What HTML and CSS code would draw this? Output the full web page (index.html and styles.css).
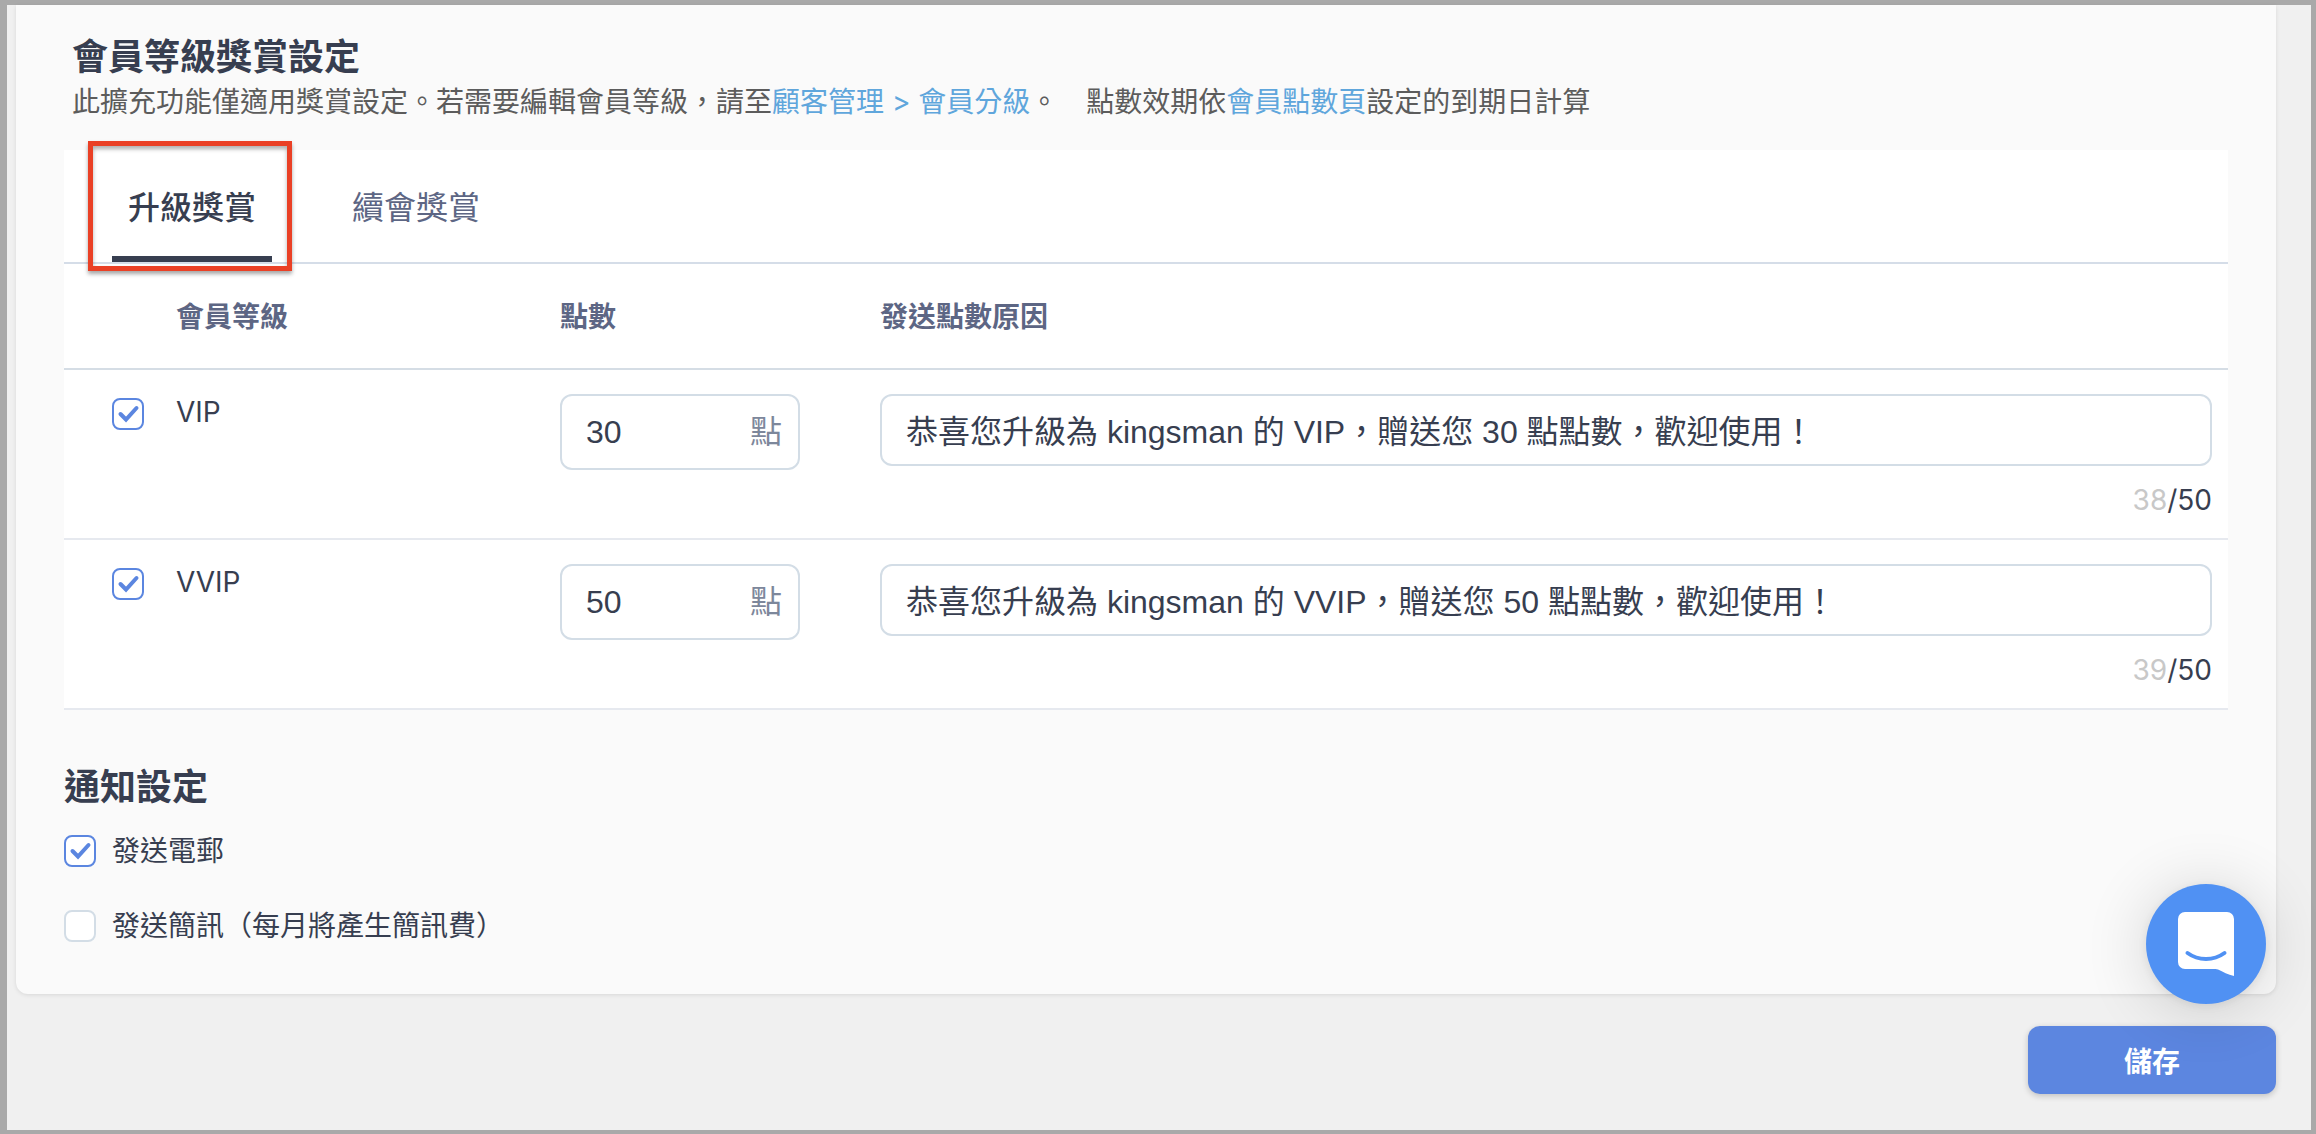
FILE: index.html
```html
<!DOCTYPE html>
<html lang="zh-Hant">
<head>
  <meta charset="UTF-8" />
  <meta name="viewport" content="width=device-width, initial-scale=1.0" />
  <title>會員等級獎賞設定</title>
  <link rel="stylesheet" href="styles.css">
</head>
<body>
  <form class="page">
    <div class="card">
      <div class="intro">
        <h2>會員等級獎賞設定</h2>
        <p>此擴充功能僅適用獎賞設定。若需要編輯會員等級，請至<a href="#">顧客管理 &gt; 會員分級</a>。<span class="note">點數效期依<a href="#">會員點數頁</a>設定的到期日計算</span></p>
      </div>

      <div class="panel">
        <div class="tabs">
          <button type="button" class="tab active">升級獎賞</button>
          <button type="button" class="tab">續會獎賞</button>
        </div>

        <table>
          <colgroup>
            <col class="col-check">
            <col class="col-level">
            <col class="col-points">
            <col>
          </colgroup>
          <thead>
            <tr>
              <th></th>
              <th>會員等級</th>
              <th>點數</th>
              <th>發送點數原因</th>
            </tr>
          </thead>
          <tbody>
            <tr>
              <td class="cell-check">
                <span class="checkbox">
                  <input type="checkbox" id="vip" checked>
                  <svg viewBox="0 0 32 32"><path d="M8.500 16l5.500 5.500L24.500 10"/></svg>
                </span>
              </td>
              <td><label class="level" for="vip">VIP</label></td>
              <td>
                <div class="points">
                  <input type="text" id="vipPoints" value="30" aria-label="VIP 點數">
                  <label for="vipPoints">點</label>
                </div>
              </td>
              <td class="cell-reason">
                <input type="text" class="reason" value="恭喜您升級為 kingsman 的 VIP，贈送您 30 點點數，歡迎使用！" aria-label="VIP 發送點數原因">
                <div class="count"><span>38</span>/50</div>
              </td>
            </tr>
            <tr>
              <td class="cell-check">
                <span class="checkbox">
                  <input type="checkbox" id="vvip" checked>
                  <svg viewBox="0 0 32 32"><path d="M8.500 16l5.500 5.500L24.500 10"/></svg>
                </span>
              </td>
              <td><label class="level" for="vvip">VVIP</label></td>
              <td>
                <div class="points">
                  <input type="text" id="vvipPoints" value="50" aria-label="VVIP 點數">
                  <label for="vvipPoints">點</label>
                </div>
              </td>
              <td class="cell-reason">
                <input type="text" class="reason" value="恭喜您升級為 kingsman 的 VVIP，贈送您 50 點點數，歡迎使用！" aria-label="VVIP 發送點數原因">
                <div class="count"><span>39</span>/50</div>
              </td>
            </tr>
          </tbody>
        </table>
      </div>

      <div class="notify">
        <h2>通知設定</h2>
        <label class="option">
          <span class="checkbox">
            <input type="checkbox" checked>
            <svg viewBox="0 0 32 32"><path d="M8.500 16l5.500 5.500L24.500 10"/></svg>
          </span>
          發送電郵
        </label>
        <label class="option">
          <span class="checkbox">
            <input type="checkbox">
            <svg viewBox="0 0 32 32"><path d="M8.500 16l5.500 5.500L24.500 10"/></svg>
          </span>
          發送簡訊（每月將產生簡訊費）
        </label>
      </div>
    </div>

    <div class="actions">
      <button type="button" class="save">儲存</button>
    </div>
  </form>

  <button type="button" class="chat" aria-label="Chat">
    <svg viewBox="0 0 56 64">
      <path fill="#fff" d="M7 0h42a7 7 0 0 1 7 7v57c-6-1.500-11-4-16-6.500q-1-.5-2.500-.5H7a7 7 0 0 1-7-7V7a7 7 0 0 1 7-7z"/>
      <path class="smile" d="M9.500 41c11 8 26 8 37 0"/>
    </svg>
  </button>
</body>
</html>
```

FILE: styles.css
```css
* {
  box-sizing: border-box;
}
body {
  margin: 0;
  font-family: Inter, "Noto Sans CJK TC", sans-serif;
  font-size: 28px;
  line-height: 40px;
  color: #373e50;
}
button, input {
  font-family: inherit;
  margin: 0;
}
h2 {
  margin: 0;
  font-size: 36px;
  line-height: 50px;
  font-weight: 700;
}
a {
  color: #5fa6dc;
  text-decoration: none;
}
.page {
  min-height: 100vh;
  padding: 0 35px 36px 9px;
  background: #f0f0f0;
  border: solid #a9a9a9;
  border-width: 5px 5px 4px 7px;
}
.card {
  padding: 27px 48px 48px;
  background: #fafafa;
  border-radius: 0 0 12px 12px;
  box-shadow: 0 1px 4px rgba(0, 0, 0, 0.1);
}
.intro {
  padding: 0 8px;
}
.intro p {
  margin: 0 0 28px;
  color: #5c5c5c;
}
.note {
  margin-left: 28px;
}

/* tabs */
.panel {
  background: #fff;
}
.tabs {
  display: flex;
  gap: 64px;
  padding: 0 48px;
  border-bottom: 2px solid #d5dde8;
}
.tab {
  position: relative;
  height: 112px;
  padding: 4px 16px 0;
  font-size: 32px;
  color: #5d6684;
  background: none;
  border: none;
  border-bottom: 6px solid transparent;
  cursor: pointer;
}
.tab.active {
  font-weight: 500;
  color: #373e50;
  border-bottom-color: #373e50;
}
/* red frame around the selected tab */
.tab.active::after {
  content: "";
  position: absolute;
  top: -9px;
  right: -20px;
  bottom: -15px;
  left: -24px;
  border: 5px solid #ea4025;
  box-shadow: 0 3px 4px rgba(0, 0, 0, 0.35), inset 0 3px 4px rgba(0, 0, 0, 0.3);
}

/* table */
table {
  width: 100%;
  table-layout: fixed;
  border-collapse: separate;
  border-spacing: 0;
}
.col-check { width: 112px; }
.col-level { width: 384px; }
.col-points { width: 320px; }
th {
  height: 106px;
  padding: 2px 0 0;
  text-align: left;
  font-weight: 700;
  color: #5d6684;
  border-bottom: 2px solid #d5dde5;
}
td {
  height: 170px;
  padding: 24px 0 0;
  vertical-align: top;
  border-bottom: 2px solid #e6e9ef;
}
.cell-check {
  padding: 28px 0 0 48px;
}
.cell-reason {
  padding-right: 16px;
}
.level {
  display: block;
  line-height: 36px;
}
.points {
  display: flex;
  align-items: center;
  width: 240px;
  height: 76px;
  padding: 0 16px 0 24px;
  background: #fff;
  border: 2px solid #d3dde6;
  border-radius: 12px;
}
.points input {
  flex: 1;
  min-width: 0;
  padding: 0;
  border: none;
  outline: none;
}
.points label {
  font-size: 32px;
  color: #7d879b;
}
.points input, .reason {
  font-family: "Liberation Sans", "Noto Sans CJK TC", sans-serif;
  font-size: 32px;
  color: #373e50;
}
.reason {
  display: block;
  width: 100%;
  height: 72px;
  padding: 0 24px 2px;
  background: #fff;
  border: 2px solid #d3dde6;
  border-radius: 12px;
}
.count {
  margin-top: 14px;
  text-align: right;
}
.count span {
  color: #c8c8c8;
}

/* checkbox */
.checkbox {
  position: relative;
  display: block;
  width: 32px;
  height: 32px;
}
.checkbox input {
  appearance: none;
  display: block;
  width: 32px;
  height: 32px;
  background: #fff;
  border: 2px solid #d3dde6;
  border-radius: 8px;
}
.checkbox input:checked {
  border-color: #5b86e0;
}
.checkbox svg {
  display: none;
  position: absolute;
  top: 0;
  left: 0;
  pointer-events: none;
  fill: none;
  stroke: #5b86e0;
  stroke-width: 4;
  stroke-linecap: round;
}
.checkbox input:checked + svg {
  display: block;
}

/* notification settings */
.notify {
  padding-top: 52px;
}
.notify h2 {
  margin-bottom: 19px;
}
.option {
  display: flex;
  align-items: center;
  gap: 16px;
  width: fit-content;
}
.option + .option {
  margin-top: 35px;
}

.actions {
  display: flex;
  justify-content: flex-end;
  margin-top: 32px;
}
.save {
  width: 248px;
  height: 68px;
  font-size: 28px;
  font-weight: 700;
  color: #fff;
  background: #5c86e0;
  border: none;
  border-radius: 12px;
  box-shadow: 0 2px 6px rgba(0, 0, 0, 0.2);
  cursor: pointer;
}

.chat {
  position: fixed;
  right: 50px;
  bottom: 130px;
  width: 120px;
  height: 120px;
  padding: 28px 32px;
  background: #5091f3;
  border: none;
  border-radius: 50%;
  box-shadow: 0 2px 12px rgba(0, 0, 0, 0.08), 0 4px 64px rgba(0, 0, 0, 0.16);
  cursor: pointer;
}
.chat svg {
  display: block;
  width: 56px;
  height: 64px;
}
.smile {
  fill: none;
  stroke: #5091f3;
  stroke-width: 4;
  stroke-linecap: round;
}
```
